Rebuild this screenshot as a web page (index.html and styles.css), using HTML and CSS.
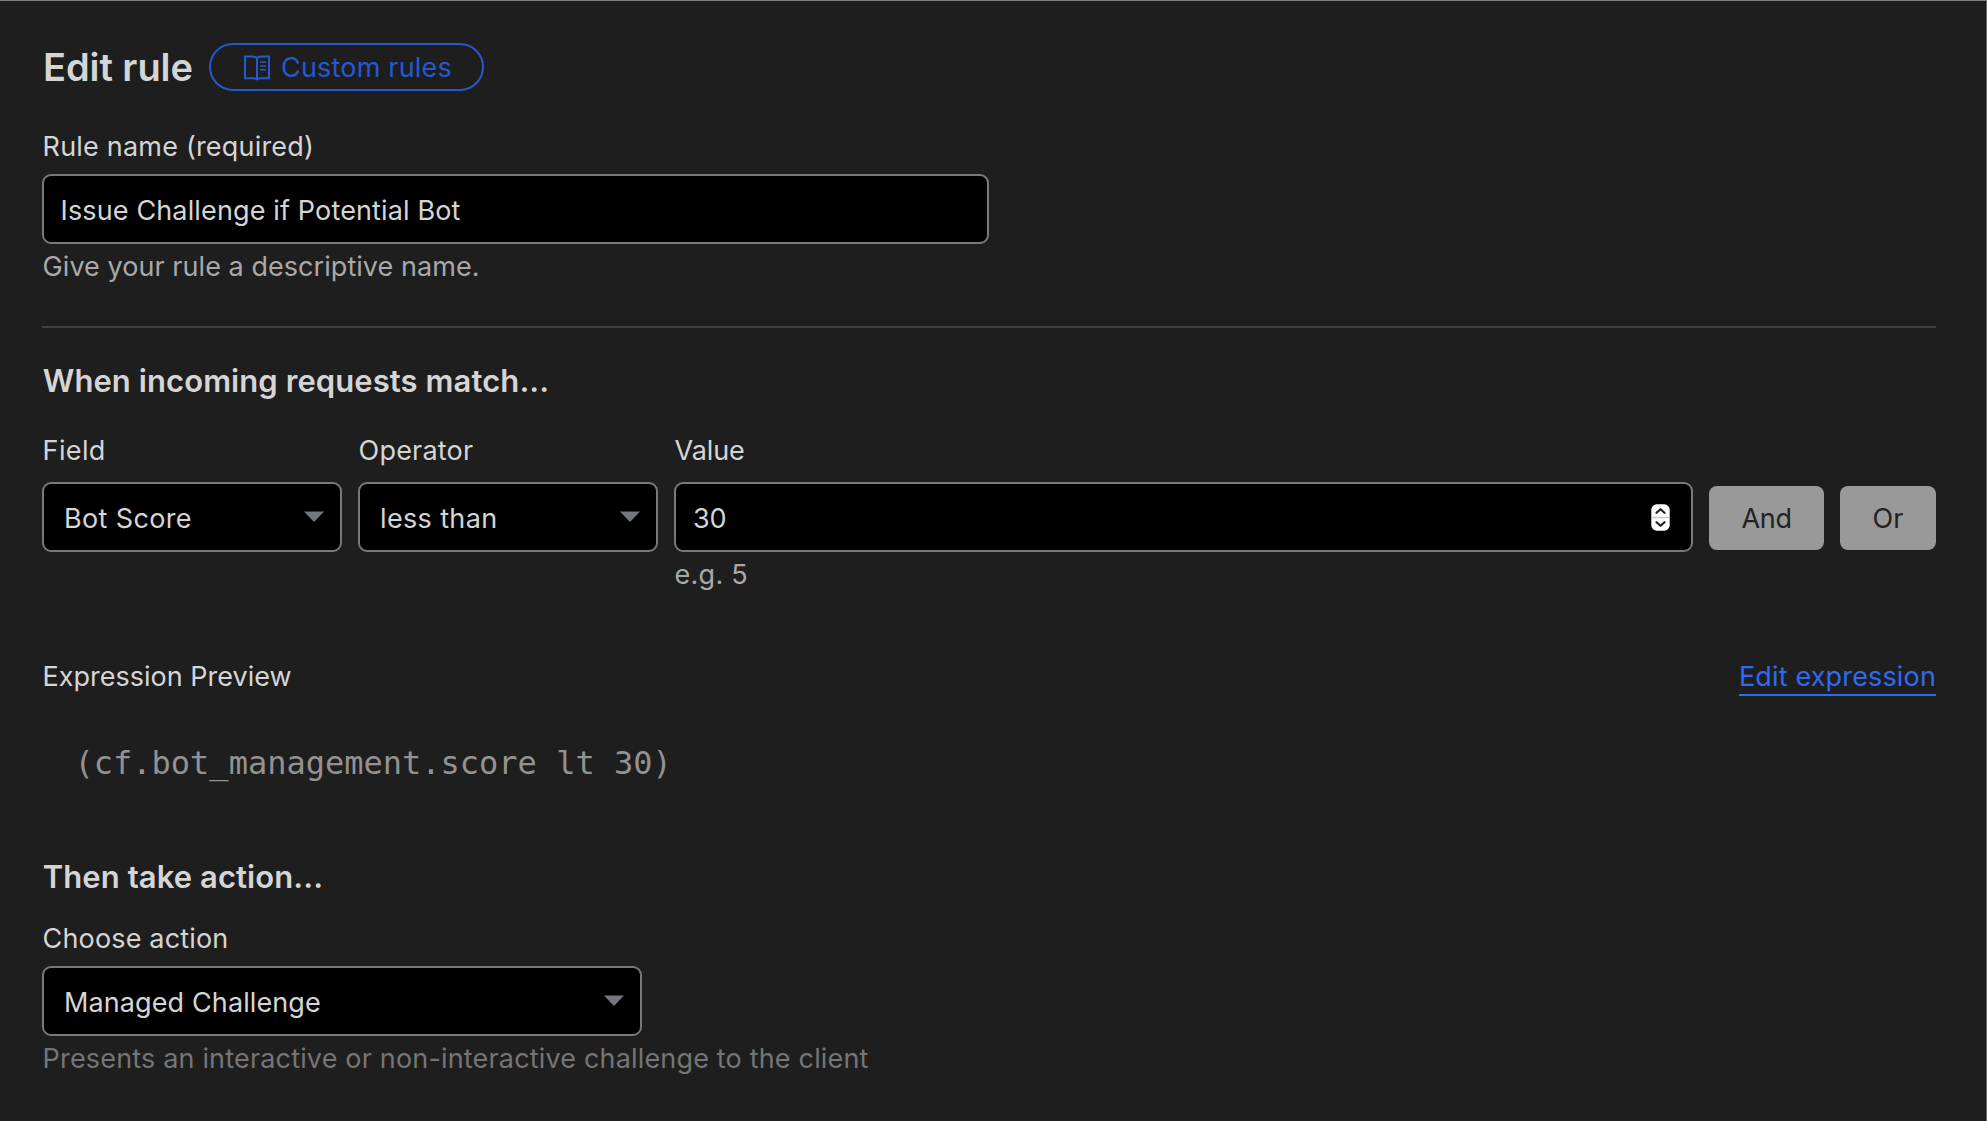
FILE: index.html
```html
<!DOCTYPE html>
<html lang="en">
<head>
<meta charset="utf-8">
<title>Edit rule</title>
<link rel="stylesheet" href="styles.css">
</head>
<body>
<main class="page">
  <header class="header">
    <h1 class="title">Edit rule</h1>
    <a class="pill">
      <svg class="book" width="28" height="28" viewBox="0 0 28 28" fill="none" stroke="currentColor" stroke-width="2">
        <path d="M14 4.2C12.800 2.600 11 2.400 9 2.400H2v21.800h8c2 0 3.200.3 4 1.100.8-.8 2-1.100 4-1.100h8V2.400h-7c-2 0-3.800.2-5 1.800zV26"/>
        <path d="M17 8h6M17 11.900h6M17 15.800h6" stroke-width="1.500"/>
      </svg>
      <span class="pill-text">Custom rules</span>
    </a>
  </header>

  <section class="name">
    <div class="label t-rule">Rule name (required)</div>
    <div class="control text-input t-issue">Issue Challenge if Potential Bot</div>
    <div class="hint">Give your rule a descriptive name.</div>
  </section>

  <hr class="divider">

  <h2 class="heading">When incoming requests match...</h2>
  <section class="condition">
    <div class="column">
      <div class="label t-wide">Field</div>
      <div class="control select t-wide">Bot Score<svg class="caret" width="20" height="11" viewBox="0 0 20 11"><path d="M0 .5h20L10 11z"/></svg></div>
    </div>
    <div class="column">
      <div class="label t-rule">Operator</div>
      <div class="control select t-wide">less than<svg class="caret" width="20" height="11" viewBox="0 0 20 11"><path d="M0 .5h20L10 11z"/></svg></div>
    </div>
    <div class="column grow">
      <div class="label t-tight">Value</div>
      <div class="control number t-tight">30
        <svg class="stepper" width="19" height="27" viewBox="0 0 19 27">
          <rect x=".3" y=".3" width="18.400" height="26.400" rx="5.500" fill="#fff"/>
          <path d="M.3 13.500h18.400" stroke="#c9c9c9" stroke-width="1.500"/>
          <path d="M5.500 8.800l4-3.600 4 3.600M5.500 18.200l4 3.600 4-3.600" fill="none" stroke="#222" stroke-width="2.200" stroke-linecap="round" stroke-linejoin="round"/>
        </svg>
      </div>
      <div class="hint t-eg">e.g. 5</div>
    </div>
    <div class="button and">And</div>
    <div class="button or">Or</div>
  </section>

  <section class="preview-head">
    <div class="label">Expression Preview</div>
    <a class="link">Edit expression</a>
  </section>
  <pre class="code">(cf.bot_management.score lt 30)</pre>

  <h2 class="heading">Then take action...</h2>
  <section class="action">
    <div class="label t-choose">Choose action</div>
    <div class="control select wide">Managed Challenge<svg class="caret" width="20" height="11" viewBox="0 0 20 11"><path d="M0 .5h20L10 11z"/></svg></div>
    <div class="hint muted">Presents an interactive or non-interactive challenge to the client</div>
  </section>
</main>
</body>
</html>
```
FILE: styles.css
```css
* { box-sizing: border-box; }
body {
  margin: 0;
  background: #1e1e1e;
  color: #d5d5d5;
  font: 400 27px/36px Inter, "Liberation Sans", sans-serif;
  white-space: nowrap;
}
.page {
  height: 1121px;
  padding: 42px 50px 0 42px;
  border-top: 1px solid #7c7c7c;
  border-right: 1px solid #6c6c6c;
  overflow: hidden;
}
.header { display: flex; align-items: center; height: 48px; }
.title {
  width: 167px;
  margin: 0;
  padding-left: 1px;
  font-size: 38px;
  line-height: 48px;
  font-weight: 600;
  letter-spacing: -0.06px;
}
.pill {
  display: flex;
  align-items: center;
  width: 275px;
  height: 48px;
  padding-left: 32px;
  border: 2px solid #2559cf;
  border-radius: 24px;
  color: #2559cf;
}
.book { margin: 1px 10px 0 0; }
.pill-text { padding-top: 2px; letter-spacing: 0.2px; }

.name { margin-top: 38px; }
.label, .hint { padding-left: 0.6px; }
.control {
  display: flex;
  align-items: center;
  height: 70px;
  padding: 3px 16px 0 16.5px;
  border: 2px solid #797979;
  border-radius: 9px;
  background: #000;
}
.text-input { width: 947px; margin-top: 9px; }
.hint { margin-top: 5px; color: #a9a9a9; letter-spacing: 0.05px; }
.divider { height: 2px; margin: 41px 0 33px; border: 0; background: #404040; }
.heading {
  margin: 0;
  padding-left: 0.7px;
  font-size: 31px;
  line-height: 40px;
  font-weight: 600;
  letter-spacing: 0.08px;
}

.condition { display: flex; gap: 16px; margin-top: 32px; }
.column { width: 300px; }
.column .control { margin-top: 13px; }
.column .hint { margin-top: 5px; }
.grow { flex: 1; }
.select { justify-content: space-between; padding: 3px 16px 0 20px; }
.caret { margin-bottom: 4px; fill: #74777b; }
.number { justify-content: space-between; padding: 3px 21px 0 17px; }
.stepper { margin-bottom: 2px; }
.button {
  height: 64px;
  margin-top: 53px;
  padding-top: 1px;
  border-radius: 8px;
  background: #999;
  color: #222;
  line-height: 64px;
  text-align: center;
}
.and { width: 115px; letter-spacing: -0.29px; }
.or { width: 96px; }

.preview-head { display: flex; justify-content: space-between; margin-top: 66px; }
.link {
  height: 37px;
  border-bottom: 2px solid #2f6bf0;
  color: #2f6bf0;
  letter-spacing: 0.15px;
}
.code {
  margin: 47px 0 74px 32.5px;
  color: #929292;
  font: 32px/40px "DejaVu Sans Mono", monospace;
}

.action { margin-top: 24px; }
.wide { width: 600px; letter-spacing: 0.11px; }
.action .wide { margin-top: 9px; }
.muted { color: #757575; letter-spacing: 0.17px; }

.t-rule { letter-spacing: 0.2px; }
.t-issue { letter-spacing: 0.14px; }
.t-wide { letter-spacing: 0.36px; }
.t-tight { letter-spacing: -0.1px; }
.t-eg { letter-spacing: 0.25px; }
.t-choose { letter-spacing: 0.16px; }
```
